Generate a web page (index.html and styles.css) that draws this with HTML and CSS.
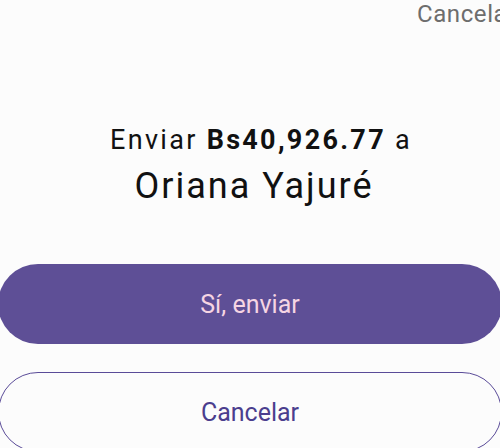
FILE: index.html
```html
<!DOCTYPE html>
<html lang="es">
<head>
  <meta charset="UTF-8">
  <title>Confirmar envío</title>
  <link rel="stylesheet" href="styles.css">
</head>
<body>

<div class="screen">
  <div class="top-bar">
    <span class="top-cancel">Cancelar</span>
  </div>

  <div class="summary">
    <div class="summary-line">Enviar <b>Bs40,926.77</b> a</div>
    <div class="summary-name">Oriana Yajuré</div>
  </div>

  <div class="actions">
    <button class="btn btn-primary">Sí, enviar</button>
    <button class="btn btn-outline">Cancelar</button>
  </div>
</div>

</body>
</html>
```

FILE: styles.css
```css
html, body{
  margin: 0;
  padding: 0;
  background: #fcfcfc;
  overflow: hidden;
}

.screen{
  width: 500px;
  height: 448px;
  font-family: Roboto, "Noto Sans", sans-serif;
  overflow: hidden;
}

.top-bar{
  display: flex;
  justify-content: flex-end;
  height: 30px;
  margin-right: -16px;
}

.top-cancel{
  font-size: 24px;
  line-height: 28px;
  letter-spacing: 0.6px;
  color: #6d6d6d;
}

.summary{
  margin-top: 90px;
  text-align: center;
  color: #111;
}

.summary-line{
  padding-left: 22px;
  font-size: 27px;
  line-height: 40px;
  letter-spacing: 2.3px;
}

.summary-line b{
  font-weight: 700;
}

.summary-name{
  padding-left: 8px;
  font-size: 36px;
  line-height: 48px;
  letter-spacing: 2px;
  margin-top: 2px;
}

.actions{
  display: flex;
  flex-direction: column;
  gap: 28px;
  margin: 54px -2px 0;
}

.btn{
  height: 80px;
  border-radius: 40px;
  font-family: Roboto, "Noto Sans", sans-serif;
  font-size: 25px;
  cursor: pointer;
}

.btn-primary{
  background: #5e4f96;
  border: none;
  color: #f6d5e3;
}

.btn-outline{
  background: transparent;
  border: 1.5px solid #5a4b98;
  color: #4b3e8e;
}
```
